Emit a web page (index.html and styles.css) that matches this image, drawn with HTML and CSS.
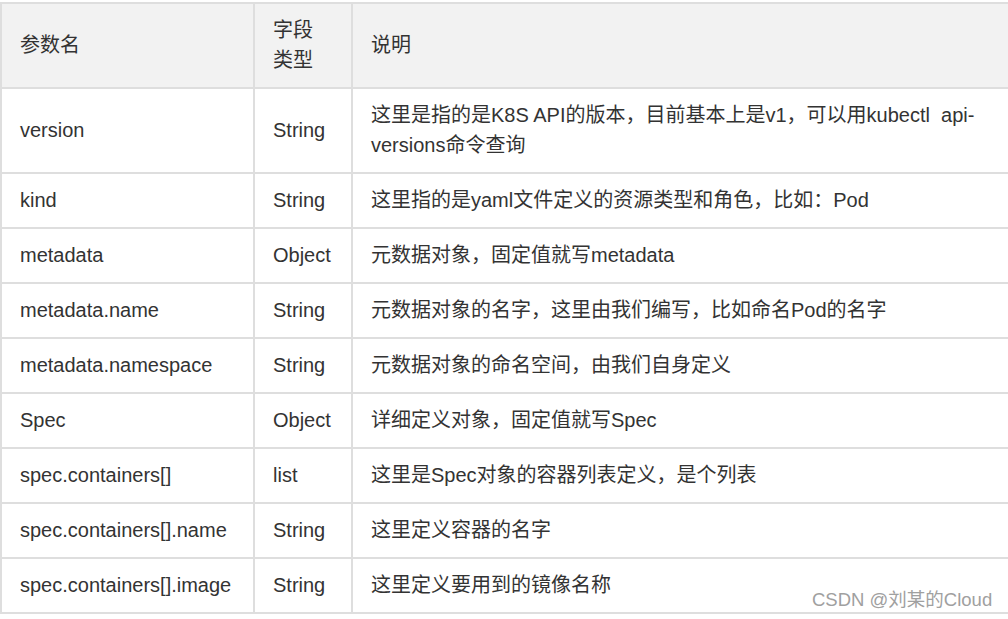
FILE: index.html
```html
<!DOCTYPE html>
<html lang="zh-CN">
<head>
<meta charset="utf-8">
<title>参数表</title>
<link rel="stylesheet" href="styles.css">
</head>
<body>
<div class="page">
  <table class="params">
    <colgroup>
      <col class="c-name">
      <col class="c-type">
      <col class="c-desc">
    </colgroup>
    <thead>
      <tr>
        <th>参数名</th>
        <th>字段<br>类型</th>
        <th>说明</th>
      </tr>
    </thead>
    <tbody>
      <tr>
        <td>version</td>
        <td>String</td>
        <td>这里是指的是K8S API的版本，目前基本上是v1，可以用kubectl&nbsp; api-<br>versions命令查询</td>
      </tr>
      <tr>
        <td>kind</td>
        <td>String</td>
        <td>这里指的是yaml文件定义的资源类型和角色，比如：Pod</td>
      </tr>
      <tr>
        <td>metadata</td>
        <td>Object</td>
        <td>元数据对象，固定值就写metadata</td>
      </tr>
      <tr>
        <td>metadata.name</td>
        <td>String</td>
        <td>元数据对象的名字，这里由我们编写，比如命名Pod的名字</td>
      </tr>
      <tr>
        <td>metadata.namespace</td>
        <td>String</td>
        <td>元数据对象的命名空间，由我们自身定义</td>
      </tr>
      <tr>
        <td>Spec</td>
        <td>Object</td>
        <td>详细定义对象，固定值就写Spec</td>
      </tr>
      <tr>
        <td>spec.containers[]</td>
        <td>list</td>
        <td>这里是Spec对象的容器列表定义，是个列表</td>
      </tr>
      <tr>
        <td>spec.containers[].name</td>
        <td>String</td>
        <td>这里定义容器的名字</td>
      </tr>
      <tr>
        <td>spec.containers[].image</td>
        <td>String</td>
        <td>这里定义要用到的镜像名称</td>
      </tr>
    </tbody>
  </table>
  <div class="watermark">CSDN @刘某的Cloud</div>
</div>
</body>
</html>
```

FILE: styles.css
```css
html, body {
  margin: 0;
  padding: 0;
  background: #ffffff;
  overflow: hidden;
}

.page {
  position: relative;
  width: 1008px;
  height: 619px;
  padding-top: 2px;
  box-sizing: border-box;
  font-family: "Liberation Sans", Arial, "Noto Sans CJK SC", sans-serif;
  color: #333333;
}

.params {
  border-collapse: collapse;
  table-layout: fixed;
  width: 1022px;
  margin-left: 0;
  font-size: 20px;
  line-height: 30px;
}

.c-name { width: 253px; }
.c-type { width: 98px; }
.c-desc { width: 671px; }

.params th,
.params td {
  border: 2px solid #dedede;
  padding: 11px 18px 12px 18px;
  text-align: left;
  vertical-align: middle;
  font-weight: normal;
}

.params th {
  background: #f2f2f2;
}

.watermark {
  position: absolute;
  left: 812px;
  top: 589px;
  font-size: 18.5px;
  line-height: 22px;
  color: #a0a0a0;
  font-family: "Liberation Sans", Arial, "Noto Sans CJK SC", sans-serif;
  white-space: nowrap;
}
```
